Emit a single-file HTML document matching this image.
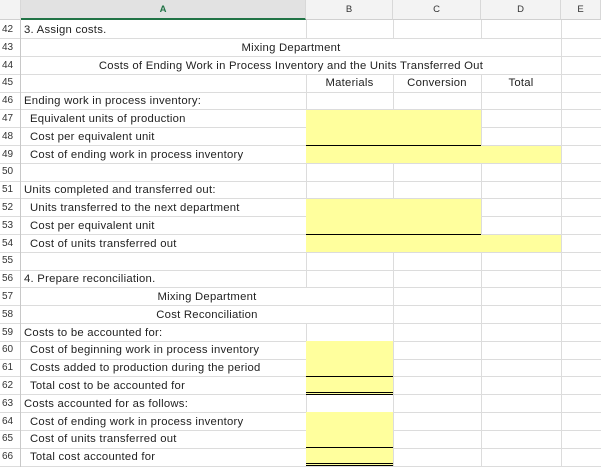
<!DOCTYPE html>
<html><head><meta charset="utf-8"><style>
*{margin:0;padding:0;box-sizing:border-box}
body{width:601px;height:467px;overflow:hidden;background:#fff;position:relative;font-family:"Liberation Sans",Calibri,sans-serif;font-size:11.3px;letter-spacing:0.25px;color:#222}
.hdr{position:absolute;top:0;height:20px;background:#f3f3f3;border-right:1px solid #d8d8d8;border-bottom:1px solid #d0d0d0;text-align:center;font-size:9.5px;line-height:20px;color:#333;letter-spacing:0}
.h{position:absolute;left:0;width:601px;height:1px;background:#dcdcdc}
.v{position:absolute;width:1px;background:#dcdcdc}
.rn{position:absolute;left:2px;font-size:10px;color:#333;line-height:17.8px;letter-spacing:0}
.t{position:absolute;line-height:17.8px;white-space:nowrap;margin-top:1px}
.y{position:absolute;background:#ffff9d}
.w{position:absolute;background:#fff}
.b{position:absolute;height:1px;background:#000}
</style></head><body>
<div class="hdr" style="left:0;width:21px"></div>
<div class="hdr" style="left:21px;width:285px;background:#e2e2e2;color:#217346;font-weight:bold;border-bottom:2px solid #217346">A</div>
<div class="hdr" style="left:306px;width:87px">B</div>
<div class="hdr" style="left:393px;width:88px">C</div>
<div class="hdr" style="left:481px;width:80px">D</div>
<div class="hdr" style="left:561px;width:40px">E</div>

<div class="h" style="top:38px"></div><div class="h" style="top:56px"></div><div class="h" style="top:74px"></div><div class="h" style="top:92px"></div><div class="h" style="top:109px"></div><div class="h" style="top:127px"></div><div class="h" style="top:145px"></div><div class="h" style="top:163px"></div><div class="h" style="top:181px"></div><div class="h" style="top:198px"></div><div class="h" style="top:216px"></div><div class="h" style="top:234px"></div><div class="h" style="top:252px"></div><div class="h" style="top:270px"></div><div class="h" style="top:287px"></div><div class="h" style="top:305px"></div><div class="h" style="top:323px"></div><div class="h" style="top:341px"></div><div class="h" style="top:359px"></div><div class="h" style="top:376px"></div><div class="h" style="top:394px"></div><div class="h" style="top:412px"></div><div class="h" style="top:430px"></div><div class="h" style="top:448px"></div><div class="h" style="top:466px"></div>
<div class="v" style="left:20px;top:20px;height:447px;background:#c8c8c8"></div>
<div class="v" style="left:306px;top:20px;height:447px"></div>
<div class="v" style="left:393px;top:20px;height:447px"></div>
<div class="v" style="left:481px;top:20px;height:447px"></div>
<div class="v" style="left:561px;top:20px;height:447px"></div>

<div class="w" style="left:21px;top:39px;width:540px;height:17px"></div>
<div class="w" style="left:21px;top:57px;width:540px;height:17px"></div>
<div class="w" style="left:21px;top:288px;width:372px;height:17px"></div>
<div class="w" style="left:21px;top:306px;width:372px;height:17px"></div>

<div class="y" style="left:306px;top:110px;width:175px;height:36px"></div>
<div class="y" style="left:306px;top:146px;width:255px;height:17px"></div>
<div class="b" style="left:306px;top:145px;width:175px"></div>
<div class="y" style="left:306px;top:199px;width:175px;height:36px"></div>
<div class="y" style="left:306px;top:235px;width:255px;height:17px"></div>
<div class="b" style="left:306px;top:234px;width:175px"></div>
<div class="y" style="left:306px;top:341px;width:87px;height:53px"></div>
<div class="b" style="left:306px;top:376px;width:87px"></div>
<div class="b" style="left:306px;top:392px;width:87px"></div>
<div class="b" style="left:306px;top:394px;width:87px"></div>
<div class="y" style="left:306px;top:412px;width:87px;height:53px"></div>
<div class="b" style="left:306px;top:447px;width:87px"></div>
<div class="b" style="left:306px;top:463px;width:87px"></div>
<div class="b" style="left:306px;top:465px;width:87px"></div>

<div class="rn" style="top:21px">42</div><div class="rn" style="top:38.8px">43</div><div class="rn" style="top:56.6px">44</div><div class="rn" style="top:74.4px">45</div><div class="rn" style="top:92.2px">46</div><div class="rn" style="top:110px">47</div><div class="rn" style="top:127.8px">48</div><div class="rn" style="top:145.6px">49</div><div class="rn" style="top:163.4px">50</div><div class="rn" style="top:181.2px">51</div><div class="rn" style="top:199px">52</div><div class="rn" style="top:216.8px">53</div><div class="rn" style="top:234.6px">54</div><div class="rn" style="top:252.4px">55</div><div class="rn" style="top:270.2px">56</div><div class="rn" style="top:288px">57</div><div class="rn" style="top:305.8px">58</div><div class="rn" style="top:323.6px">59</div><div class="rn" style="top:341.4px">60</div><div class="rn" style="top:359.2px">61</div><div class="rn" style="top:377px">62</div><div class="rn" style="top:394.8px">63</div><div class="rn" style="top:412.6px">64</div><div class="rn" style="top:430.4px">65</div><div class="rn" style="top:448.2px">66</div>

<div class="t" style="left:24px;top:21px">3. Assign costs.</div>
<div class="t" style="left:21px;width:540px;text-align:center;top:39px">Mixing Department</div>
<div class="t" style="left:21px;width:540px;text-align:center;top:57px">Costs of Ending Work in Process Inventory and the Units Transferred Out</div>
<div class="t" style="left:306px;width:87px;text-align:center;top:74.4px">Materials</div>
<div class="t" style="left:393px;width:88px;text-align:center;top:74.4px">Conversion</div>
<div class="t" style="left:481px;width:80px;text-align:center;top:74.4px">Total</div>
<div class="t" style="left:24px;top:92.2px">Ending work in process inventory:</div>
<div class="t" style="left:30px;top:110px">Equivalent units of production</div>
<div class="t" style="left:30px;top:127.8px">Cost per equivalent unit</div>
<div class="t" style="left:30px;top:145.6px">Cost of ending work in process inventory</div>
<div class="t" style="left:24px;top:181.2px">Units completed and transferred out:</div>
<div class="t" style="left:30px;top:199px">Units transferred to the next department</div>
<div class="t" style="left:30px;top:216.8px">Cost per equivalent unit</div>
<div class="t" style="left:30px;top:234.6px">Cost of units transferred out</div>
<div class="t" style="left:24px;top:270.2px">4. Prepare reconciliation.</div>
<div class="t" style="left:21px;width:372px;text-align:center;top:288px">Mixing Department</div>
<div class="t" style="left:21px;width:372px;text-align:center;top:305.8px">Cost Reconciliation</div>
<div class="t" style="left:24px;top:323.6px">Costs to be accounted for:</div>
<div class="t" style="left:30px;top:341.4px">Cost of beginning work in process inventory</div>
<div class="t" style="left:30px;top:359.2px">Costs added to production during the period</div>
<div class="t" style="left:30px;top:377px">Total cost to be accounted for</div>
<div class="t" style="left:24px;top:394.8px">Costs accounted for as follows:</div>
<div class="t" style="left:30px;top:412.6px">Cost of ending work in process inventory</div>
<div class="t" style="left:30px;top:430.4px">Cost of units transferred out</div>
<div class="t" style="left:30px;top:448.2px">Total cost accounted for</div>
</body></html>
